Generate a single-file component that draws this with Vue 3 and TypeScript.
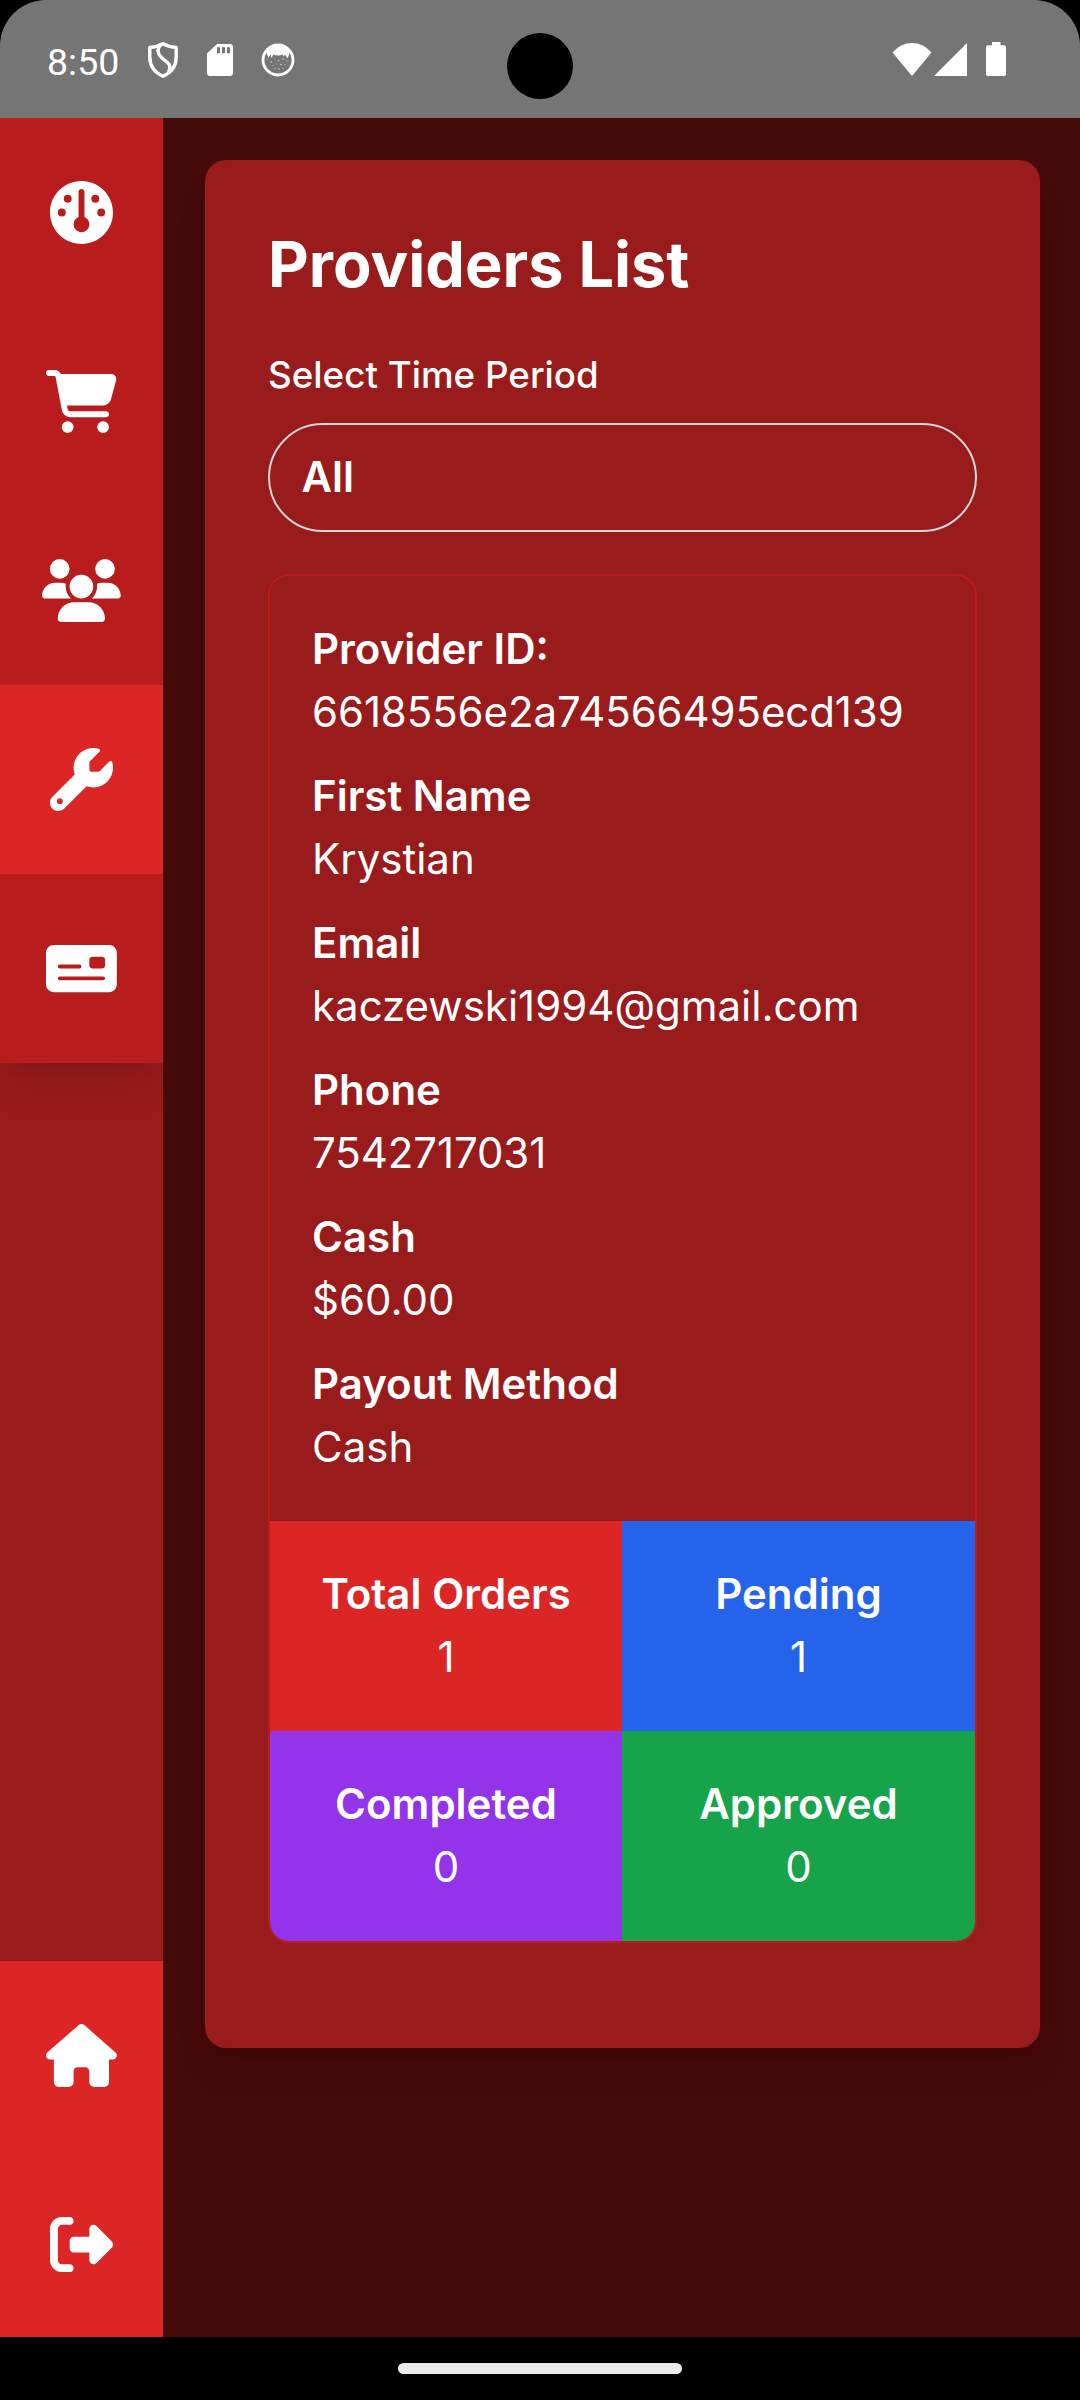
<script setup lang="ts">
interface NavIcon {
  name: string
  width: number
  path: string
  active?: boolean
}

interface Field {
  label: string
  value: string
  numeric?: boolean
}

interface Stat {
  label: string
  value: string
  tone: 'red' | 'blue' | 'purple' | 'green'
}

const topNav: NavIcon[] = [
  {
    name: 'Dashboard',
    width: 512,
    path: 'M512 256C512 397.4 397.4 512 256 512C114.6 512 0 397.4 0 256C0 114.6 114.6 0 256 0C397.4 0 512 114.6 512 256zM280 292.7V88C280 74.75 269.3 64 256 64C242.7 64 232 74.75 232 88V292.7C208.5 302.1 192 325.1 192 352C192 387.3 220.7 416 256 416C291.3 416 320 387.3 320 352C320 325.1 303.5 302.1 280 292.7zM144 176a32 32 0 1 0 0-64a32 32 0 1 0 0 64zM96 224a32 32 0 1 0 0 64a32 32 0 1 0 0-64zM416 288a32 32 0 1 0 0-64a32 32 0 1 0 0 64zM368 112a32 32 0 1 0 0 64a32 32 0 1 0 0-64z',
  },
  {
    name: 'Orders',
    width: 576,
    path: 'M0 24C0 10.7 10.7 0 24 0H69.5c22 0 41.5 12.8 50.6 32h411c26.3 0 45.5 25 38.6 50.4l-41 152.3c-8.5 31.4-37 53.3-69.5 53.3H170.7l5.4 28.5c2.2 11.3 12.1 19.5 23.6 19.5H488c13.3 0 24 10.7 24 24s-10.7 24-24 24H199.7c-34.6 0-64.3-24.6-70.7-58.5L77.4 54.5c-.7-3.8-4-6.5-7.9-6.5H24C10.7 48 0 37.3 0 24zM128 464a48 48 0 1 1 96 0 48 48 0 1 1 -96 0zm336-48a48 48 0 1 1 0 96 48 48 0 1 1 0-96z',
  },
  {
    name: 'Users',
    width: 640,
    path: 'M144 0a80 80 0 1 1 0 160A80 80 0 1 1 144 0zM512 0a80 80 0 1 1 0 160A80 80 0 1 1 512 0zM0 298.7C0 239.8 47.8 192 106.7 192h42.7c15.9 0 31 3.5 44.6 9.7c-1.3 7.2-1.9 14.7-1.9 22.3c0 38.2 16.8 72.5 43.3 96c-.2 0-.4 0-.7 0H21.3C9.6 320 0 310.4 0 298.7zM405.3 320c-.2 0-.4 0-.7 0c26.6-23.5 43.3-57.8 43.3-96c0-7.6-.7-15-1.9-22.3c13.6-6.3 28.7-9.7 44.6-9.7h42.7C592.2 192 640 239.8 640 298.7c0 11.8-9.6 21.3-21.3 21.3H405.3zM224 224a96 96 0 1 1 192 0 96 96 0 1 1 -192 0zM128 485.3C128 411.7 187.7 352 261.3 352H378.7C452.3 352 512 411.7 512 485.3c0 14.7-11.9 26.7-26.7 26.7H154.7c-14.7 0-26.7-11.9-26.7-26.7z',
  },
  {
    name: 'Providers',
    width: 512,
    active: true,
    path: 'M352 320c88.4 0 160-71.6 160-160c0-15.3-2.2-30.1-6.2-44.2c-3.1-10.8-16.4-13.2-24.3-5.3l-76.8 76.8c-3 3-7.1 4.7-11.3 4.7H336c-8.8 0-16-7.2-16-16V118.6c0-4.2 1.7-8.3 4.7-11.3l76.8-76.8c7.9-7.9 5.4-21.2-5.3-24.3C382.1 2.2 367.3 0 352 0C263.6 0 192 71.6 192 160c0 19.1 3.4 37.5 9.5 54.5L19.9 396.1C7.2 408.8 0 426.1 0 444.1C0 481.6 30.4 512 67.9 512c18 0 35.3-7.2 48-19.9L297.5 310.5c17 6.2 35.4 9.5 54.5 9.5zM80 408a24 24 0 1 1 0 48 24 24 0 1 1 0-48z',
  },
  {
    name: 'Payouts',
    width: 576,
    path: 'M64 64C28.7 64 0 92.7 0 128V384c0 35.3 28.7 64 64 64H512c35.3 0 64-28.7 64-64V128c0-35.3-28.7-64-64-64H64zM112 320H464c8.8 0 16 7.2 16 16s-7.2 16-16 16H112c-8.8 0-16-7.2-16-16s7.2-16 16-16zM96 240c0-8.8 7.2-16 16-16H272c8.8 0 16 7.2 16 16s-7.2 16-16 16H112c-8.8 0-16-7.2-16-16zM376 160h80c13.3 0 24 10.7 24 24v48c0 13.3-10.7 24-24 24H376c-13.3 0-24-10.7-24-24V184c0-13.3 10.7-24 24-24z',
  },
]

const bottomNav: NavIcon[] = [
  {
    name: 'Home',
    width: 576,
    path: 'M575.8 255.5c0 18-15 32.1-32 32.1h-32l.7 160.2c0 2.7-.2 5.4-.5 8.1V472c0 22.1-17.9 40-40 40H456c-1.1 0-2.2 0-3.3-.1c-1.4 .1-2.8 .1-4.2 .1H416 392c-22.1 0-40-17.9-40-40V448 384c0-17.7-14.3-32-32-32H256c-17.7 0-32 14.3-32 32v64 24c0 22.1-17.9 40-40 40H160 128.1c-1.5 0-3-.1-4.5-.2c-1.2 .1-2.4 .2-3.6 .2H104c-22.1 0-40-17.9-40-40V360c0-.9 0-1.9 .1-2.8V287.6H32c-18 0-32-14-32-32.1c0-9 3-17 10-24L266.4 8c7-7 15-8 22-8s15 2 21 7L564.8 231.5c8 7 12 15 11 24z',
  },
  {
    name: 'Log out',
    width: 512,
    path: 'M377.9 105.9L500.7 228.7c7.2 7.2 11.3 17.1 11.3 27.3s-4.1 20.1-11.3 27.3L377.9 406.1c-6.4 6.4-15 9.9-24 9.9c-18.7 0-33.9-15.2-33.9-33.9l0-62.1-128 0c-17.7 0-32-14.3-32-32l0-64c0-17.7 14.3-32 32-32l128 0 0-62.1c0-18.7 15.2-33.9 33.9-33.9c9 0 17.6 3.6 24 9.9zM160 96L96 96c-17.7 0-32 14.3-32 32l0 256c0 17.7 14.3 32 32 32l64 0c17.7 0 32 14.3 32 32s-14.3 32-32 32l-64 0c-53 0-96-43-96-96L0 128C0 75 43 32 96 32l64 0c17.7 0 32 14.3 32 32s-14.3 32-32 32z',
  },
]

const fields: Field[] = [
  { label: 'Provider ID:', value: '6618556e2a74566495ecd139', numeric: true },
  { label: 'First Name', value: 'Krystian' },
  { label: 'Email', value: 'kaczewski1994@gmail.com' },
  { label: 'Phone', value: '7542717031', numeric: true },
  { label: 'Cash', value: '$60.00' },
  { label: 'Payout Method', value: 'Cash' },
]

const stats: Stat[] = [
  { label: 'Total Orders', value: '1', tone: 'red' },
  { label: 'Pending', value: '1', tone: 'blue' },
  { label: 'Completed', value: '0', tone: 'purple' },
  { label: 'Approved', value: '0', tone: 'green' },
]
</script>

<template>
  <div class="screen">
    <header class="status">
      <div class="status-left">
        <span class="clock">8:50</span>
        <svg width="30" height="36" viewBox="0 0 30 36" fill="none" stroke="#fff" stroke-width="3.400" stroke-linejoin="round">
          <path d="M15 1.700C11 4 6.500 5 1.800 5.400V15C1.800 23.500 6.500 30.500 15 34.200C23.500 30.500 28.200 23.500 28.200 15V5.400C23.500 5 19 4 15 1.700Z" />
          <path d="M13 2.500C8.500 6.500 9.500 12 13.500 15.500L20 21C22.500 23.500 22.500 26 20.500 30" />
        </svg>
        <svg class="sd" width="26" height="32" viewBox="0 0 26 32" fill="#fff">
          <path fill-rule="evenodd" d="M10 0H23Q26 0 26 3V29Q26 32 23 32H3Q0 32 0 29V9.500ZM10 3.300V9.300H13V3.300ZM15 3.300V9.300H18V3.300ZM20 3.300V9.300H23V3.300Z" />
        </svg>
        <svg class="cat" width="34" height="34" viewBox="0 0 34 34">
          <circle cx="17" cy="17" r="15" fill="none" stroke="#fff" stroke-width="2.800" />
          <path fill="#fff" d="M5 9Q10 2 17 2T29 9L26.500 15.500L24 11.500L22.500 13.500L21.500 11.500Q17 13.500 12.500 11.500L10.500 15L9.500 11.500L7.500 15Z" />
          <g fill="#fff" opacity=".65">
            <circle cx="6" cy="16" r=".6" /><circle cx="10" cy="19" r=".8" /><circle cx="14" cy="16" r=".6" />
            <circle cx="17.500" cy="17.500" r=".8" /><circle cx="22" cy="16" r=".8" /><circle cx="26" cy="18" r=".6" />
            <circle cx="12" cy="22.500" r=".6" /><circle cx="15.500" cy="21" r=".5" />
            <circle cx="20" cy="21.500" r=".8" /><circle cx="24" cy="21.500" r=".6" />
            <circle cx="14" cy="25.500" r=".7" /><circle cx="18" cy="26" r=".8" /><circle cx="22" cy="25.500" r=".6" />
          </g>
        </svg>
      </div>
      <div class="camera"></div>
      <div class="status-right">
        <svg width="40" height="33" viewBox="0 0 40 33" fill="#fff"><path d="M20 33L0.500 9.500Q8.500 0 20 0T39.500 9.500Z" /></svg>
        <svg class="signal" width="33" height="33" viewBox="0 0 33 33" fill="#fff"><path d="M33 0V33H0Z" /></svg>
        <svg class="battery" width="20" height="34" viewBox="0 0 20 34" fill="#fff"><path d="M6 0H14.500V3.300H18Q20 3.300 20 5.300V32Q20 34 18 34H2Q0 34 0 32V5.300Q0 3.300 2 3.300H6Z" /></svg>
      </div>
    </header>

    <div class="body">
      <nav class="sidebar">
        <div class="nav-top">
          <a v-for="item in topNav" :key="item.name" class="nav-item" :class="{ active: item.active }" :aria-label="item.name">
            <svg class="nav-icon" :viewBox="`0 0 ${item.width} 512`" fill="#fff"><path fill-rule="evenodd" :d="item.path" /></svg>
          </a>
        </div>
        <div class="nav-bottom">
          <a v-for="item in bottomNav" :key="item.name" class="nav-item active" :aria-label="item.name">
            <svg class="nav-icon" :viewBox="`0 0 ${item.width} 512`" fill="#fff"><path :d="item.path" /></svg>
          </a>
        </div>
      </nav>

      <main class="content">
        <section class="card">
          <h1 class="title">Providers List</h1>
          <div class="label">Select Time Period</div>
          <div class="select">All</div>
          <div class="provider">
            <dl class="fields">
              <div v-for="f in fields" :key="f.label">
                <dt>{{ f.label }}</dt>
                <dd :class="{ numeric: f.numeric }">{{ f.value }}</dd>
              </div>
            </dl>
            <div class="stats">
              <div v-for="s in stats" :key="s.label" class="stat" :class="s.tone">
                <div class="stat-label">{{ s.label }}</div>
                <div>{{ s.value }}</div>
              </div>
            </div>
          </div>
        </section>
      </main>
    </div>

    <footer class="gesture"><div class="pill"></div></footer>
  </div>
</template>

<style>
body {
  margin: 0;
  background: #000;
}
</style>

<style scoped>
.screen {
  width: 1080px;
  height: 2400px;
  overflow: hidden;
  display: flex;
  flex-direction: column;
  background: #000;
  color: #fff;
  font-family: Inter, "Liberation Sans", sans-serif;
  font-size: 42px;
  line-height: 63px;
}
svg {
  display: block;
  flex: none;
}
.status {
  position: relative;
  flex: none;
  box-sizing: border-box;
  height: 118px;
  padding: 0 74px 0 47px;
  display: flex;
  justify-content: space-between;
  background: #757575;
  border-radius: 46px 46px 0 0;
}
.status-left,
.status-right {
  display: flex;
  align-items: center;
  height: 120px;
}
.clock {
  width: 101px;
  font-family: Roboto, sans-serif;
  font-size: 37.5px;
  line-height: 44px;
  margin-top: 3px;
}
.sd {
  margin-left: 29px;
}
.cat {
  margin-left: 28px;
}
.camera {
  position: absolute;
  left: 507px;
  top: 33px;
  width: 66px;
  height: 66px;
  border-radius: 50%;
  background: #000;
}
.status-right {
  height: 118px;
}
.signal {
  margin-left: 2px;
}
.battery {
  margin-left: 19px;
}
.body {
  flex: none;
  height: 2219px;
  display: flex;
  overflow: hidden;
  background: #450a0a;
}
.sidebar {
  flex: none;
  width: 163px;
  height: 2221px;
  display: flex;
  flex-direction: column;
  justify-content: space-between;
  overflow: hidden;
  background: #991b1b;
}
.nav-top {
  box-shadow: 0 26px 39px -8px rgba(0, 0, 0, 0.1), 0 10px 16px -10px rgba(0, 0, 0, 0.1);
}
.nav-item {
  display: flex;
  align-items: center;
  justify-content: center;
  height: 189px;
  background: #b91c1c;
}
.nav-item.active {
  background: #dc2626;
}
.nav-icon {
  height: 63px;
}
.content {
  flex: 1;
  padding: 42px 40px 0 42px;
}
.card {
  padding: 62px 63px 105px;
  border-radius: 21px;
  background: #991b1b;
  box-shadow: 0 26px 39px -8px rgba(0, 0, 0, 0.1), 0 10px 16px -10px rgba(0, 0, 0, 0.1);
}
.title {
  margin: 0 0 42px;
  font-size: 63px;
  line-height: 84px;
  font-weight: 700;
}
.label {
  margin-bottom: 22px;
  font-size: 36.75px;
  line-height: 53px;
  font-weight: 500;
}
.select {
  box-sizing: border-box;
  height: 109px;
  padding: 20px 31.5px;
  border: 2px solid #d1d5db;
  border-radius: 55px;
  font-weight: 600;
}
.provider {
  margin-top: 42px;
  border: 2px solid #b91c1c;
  border-radius: 21px;
  overflow: hidden;
}
.fields {
  margin: 0;
  padding: 41px 42px 43px;
  display: flex;
  flex-direction: column;
  gap: 21px;
}
dt,
.stat-label {
  font-weight: 600;
}
dd {
  margin: 0;
}
.numeric {
  letter-spacing: -0.1px;
}
.stats {
  display: grid;
  grid-template-columns: 352px 1fr;
}
.stat {
  padding: 41px 0 43px;
  text-align: center;
}
.red {
  background: #dc2626;
}
.blue {
  background: #2563eb;
}
.purple {
  background: #9333ea;
}
.green {
  background: #16a34a;
}
.gesture {
  flex: 1;
  display: flex;
  align-items: center;
  justify-content: center;
}
.pill {
  width: 284px;
  height: 11px;
  border-radius: 5.5px;
  background: #ebebeb;
}
</style>
